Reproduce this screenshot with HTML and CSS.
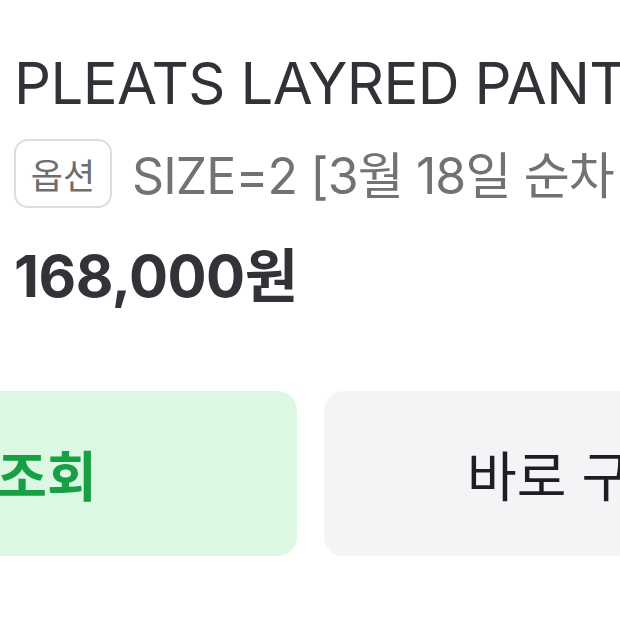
FILE: index.html
```html
<!DOCTYPE html>
<html lang="ko">
<head>
<meta charset="utf-8">
<link rel="stylesheet" href="styles.css">
</head>
<body>
<div class="info">
  <h1 class="title">PLEATS LAYRED PANTS</h1>
  <div class="option-row">
    <span class="chip">옵션</span>
    <span class="option-text">SIZE=2 [3월 18일 순차 배송]</span>
  </div>
  <div class="price">168,000원</div>
</div>
<div class="actions">
  <button class="btn btn-green">조회</button>
  <button class="btn btn-grey">바로 구매</button>
</div>
</body>
</html>
```
FILE: styles.css
```css
html, body {
  margin: 0;
  padding: 0;
  overflow: hidden;
  background: #ffffff;
}
body {
  width: 620px;
  height: 620px;
  font-family: Inter, "Noto Sans CJK KR", sans-serif;
}
.info {
  padding: 48px 0 0 14px;
}
.title {
  margin: 0;
  font-size: 58px;
  line-height: 70px;
  font-weight: 400;
  letter-spacing: -0.6px;
  color: #313137;
  white-space: nowrap;
}
.option-row {
  display: flex;
  align-items: center;
  gap: 20px;
  margin-top: 17px;
  white-space: nowrap;
}
.chip {
  flex: none;
  box-sizing: border-box;
  width: 98px;
  height: 69px;
  border: 2px solid #dedede;
  border-radius: 14px;
  display: flex;
  align-items: center;
  justify-content: center;
  font-family: "Noto Sans CJK KR", sans-serif;
  font-size: 35px;
  color: #6e6e6e;
}
.option-text {
  font-size: 50px;
  line-height: 70px;
  letter-spacing: -0.9px;
  color: #727272;
  margin-top: 6px;
}
.price {
  margin-top: 29px;
  font-size: 58px;
  line-height: 72px;
  font-weight: 700;
  letter-spacing: -0.5px;
  color: #323238;
}
.actions {
  display: flex;
  gap: 27px;
  margin-top: 79px;
  margin-left: -203px;
}
.btn {
  flex: none;
  width: 500px;
  height: 165px;
  border: none;
  border-radius: 20px;
  font-family: "Noto Sans CJK KR", sans-serif;
  font-size: 54px;
  padding: 0;
}
.btn-green {
  background: #dcf8e3;
  color: #17a043;
  font-weight: 700;
}
.btn-grey {
  background: #f3f4f6;
  color: #1e1e22;
  font-weight: 400;
}
```
